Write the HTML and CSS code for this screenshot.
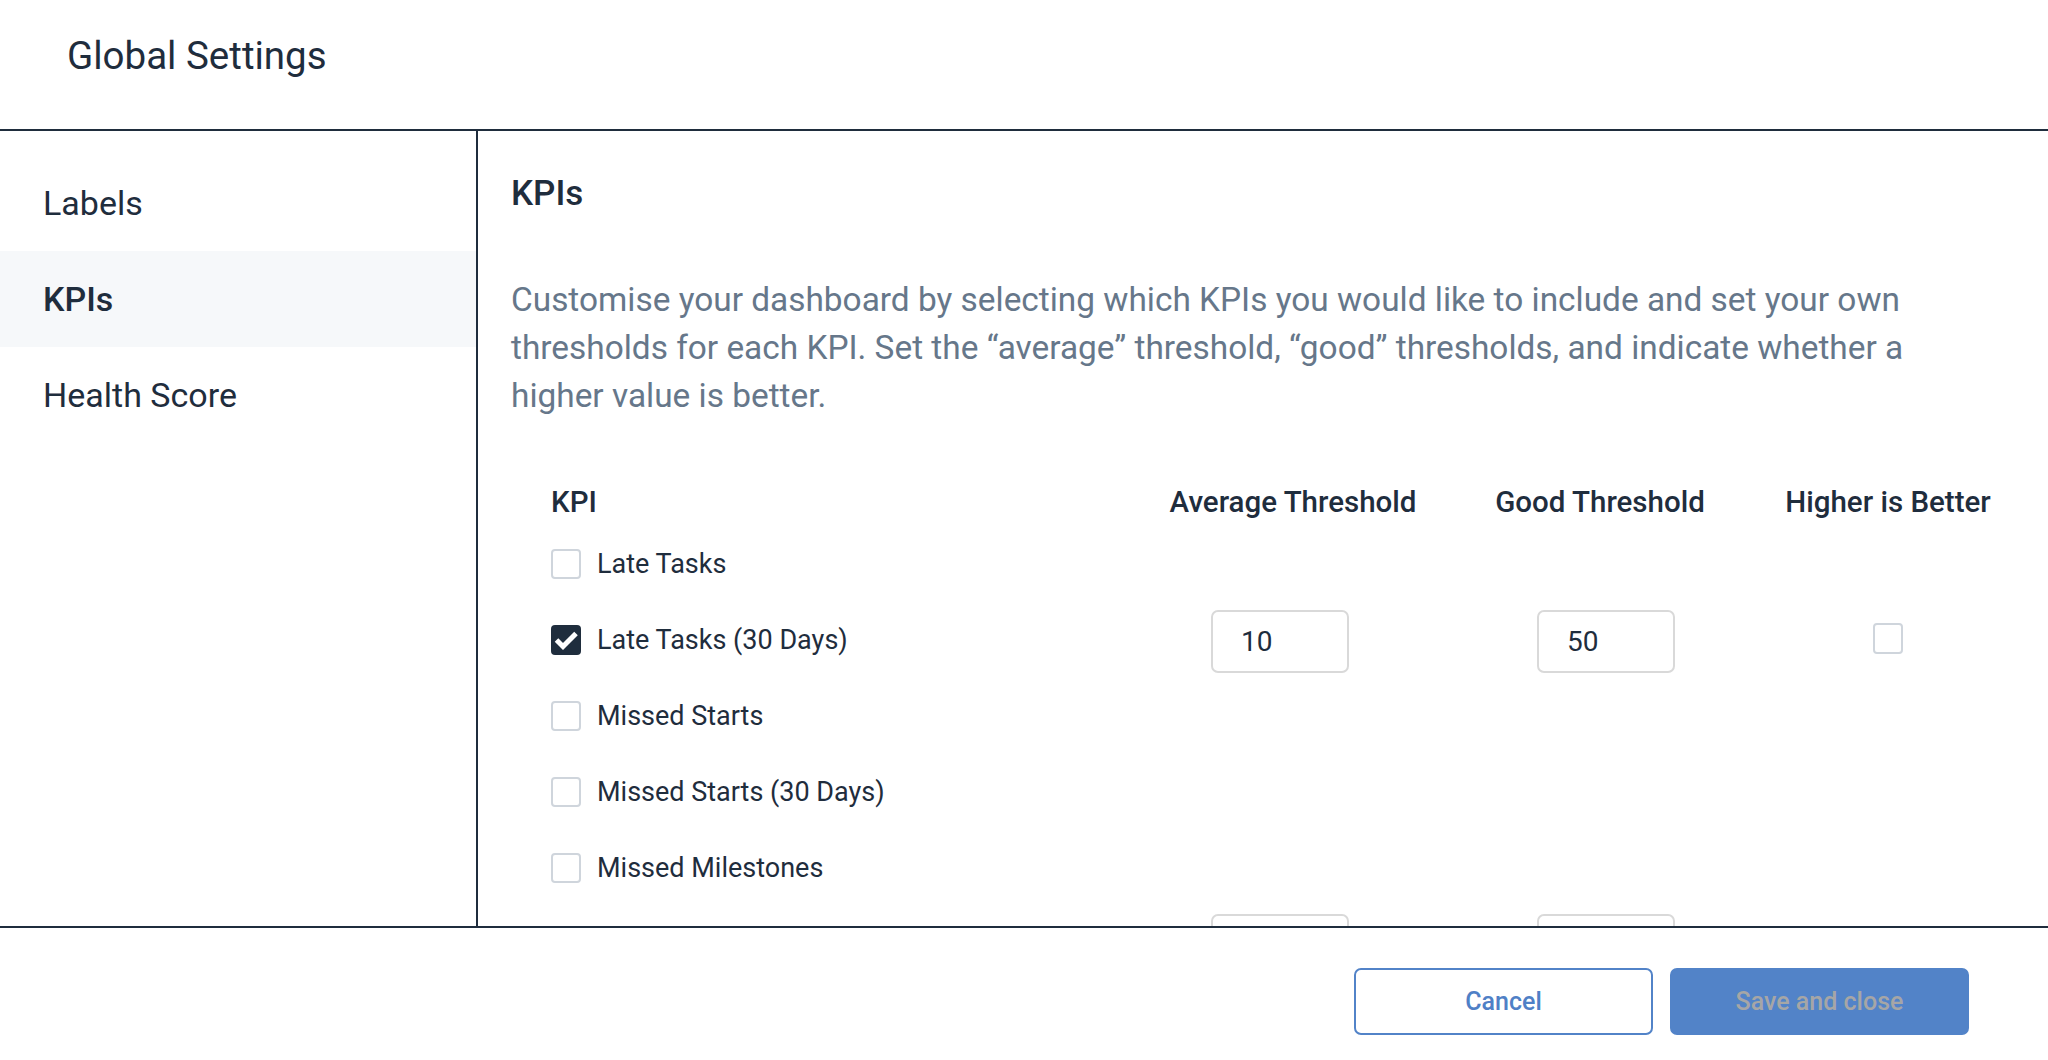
FILE: index.html
```html
<!DOCTYPE html>
<html lang="en">
<head>
<meta charset="utf-8">
<title>Global Settings</title>
<link rel="stylesheet" href="styles.css">
</head>
<body>
<div class="dialog">
  <header class="dialog-header">
    <h1 class="dialog-title">Global Settings</h1>
  </header>
  <main class="dialog-main">
    <nav class="sidebar">
      <div class="nav-item">Labels</div>
      <div class="nav-item active">KPIs</div>
      <div class="nav-item">Health Score</div>
    </nav>
    <section class="content">
      <h2 class="section-title">KPIs</h2>
      <p class="intro">Customise your dashboard by selecting which KPIs you would like to include and set your own thresholds for each KPI. Set the “average” threshold, “good” thresholds, and indicate whether a higher value is better.</p>
      <div class="kpi-table">
        <div class="th th-kpi">KPI</div>
        <div class="th">Average Threshold</div>
        <div class="th">Good Threshold</div>
        <div class="th">Higher is Better</div>

        <div class="td td-kpi"><span class="cb"></span><span class="kpi-name">Late Tasks</span></div>
        <div class="td"></div>
        <div class="td"></div>
        <div class="td"></div>

        <div class="td td-kpi"><span class="cb checked"><svg viewBox="0 0 30 30" width="30" height="30"><path d="M5.5 15 L12 21.5 L25 8.5" fill="none" stroke="#ffffff" stroke-width="5"/></svg></span><span class="kpi-name">Late Tasks (30 Days)</span></div>
        <div class="td td-avg"><input class="num" type="text" value="10"></div>
        <div class="td td-good"><input class="num" type="text" value="50"></div>
        <div class="td td-higher"><span class="cb"></span></div>

        <div class="td td-kpi"><span class="cb"></span><span class="kpi-name">Missed Starts</span></div>
        <div class="td"></div>
        <div class="td"></div>
        <div class="td"></div>

        <div class="td td-kpi"><span class="cb"></span><span class="kpi-name">Missed Starts (30 Days)</span></div>
        <div class="td"></div>
        <div class="td"></div>
        <div class="td"></div>

        <div class="td td-kpi"><span class="cb"></span><span class="kpi-name">Missed Milestones</span></div>
        <div class="td"></div>
        <div class="td"></div>
        <div class="td"></div>

        <div class="td td-kpi"><span class="cb checked"></span></div>
        <div class="td td-avg"><input class="num" type="text" value=""></div>
        <div class="td td-good"><input class="num" type="text" value=""></div>
        <div class="td td-higher"><span class="cb"></span></div>
      </div>
    </section>
  </main>
  <footer class="dialog-footer">
    <button class="btn btn-secondary" type="button">Cancel</button>
    <button class="btn btn-primary" type="button" disabled>Save and close</button>
  </footer>
</div>
</body>
</html>
```
FILE: styles.css
```css
* { box-sizing: border-box; }

html, body {
  margin: 0;
  padding: 0;
  background: #ffffff;
}

body {
  font-family: Roboto, "Liberation Sans", Arial, sans-serif;
  color: #1f2d3d;
}

.dialog {
  width: 2048px;
  height: 1060px;
  display: flex;
  flex-direction: column;
  overflow: hidden;
}

.dialog-header {
  height: 131px;
  flex: 0 0 131px;
  border-bottom: 2px solid #1f2d3d;
  padding: 34px 0 0 67px;
}

.dialog-title {
  margin: 0;
  font-size: 38.5px;
  line-height: 44px;
  font-weight: 400;
  color: #1f2d3d;
}

.dialog-main {
  flex: 1 1 auto;
  display: flex;
  min-height: 0;
}

.sidebar {
  width: 478px;
  flex: 0 0 478px;
  border-right: 2px solid #1f2d3d;
  padding-top: 24px;
}

.nav-item {
  height: 96px;
  display: flex;
  align-items: center;
  padding-left: 43px;
  font-size: 34px;
  color: #1f2d3d;
}

.nav-item.active {
  background: #f6f8fa;
  font-weight: 500;
}

.content {
  flex: 1 1 auto;
  padding: 43px 36px 0 33px;
  overflow: hidden;
}

.section-title {
  margin: 0;
  font-size: 35px;
  line-height: 40px;
  font-weight: 500;
  color: #1f2d3d;
}

.intro {
  max-width: 1450px;
  margin: 62px 0 0 0;
  font-size: 33.4px;
  line-height: 48px;
  color: #66778a;
}

.kpi-table {
  margin: 64px 0 0 40px;
  display: grid;
  grid-template-columns: 599px 286px 328px 248px;
  grid-template-rows: 42px;
  grid-auto-rows: 76px;
}

.th {
  font-size: 29.5px;
  line-height: 36px;
  font-weight: 500;
  text-align: center;
  color: #1f2d3d;
}

.th.th-kpi {
  text-align: left;
}

.td {
  display: flex;
  align-items: center;
  justify-content: center;
}

.td.td-kpi {
  justify-content: flex-start;
  gap: 16px;
}

.kpi-name {
  font-size: 27px;
  color: #1f2d3d;
}

.cb {
  width: 30px;
  height: 30px;
  flex: 0 0 30px;
  border: 2px solid #cfd5dc;
  border-radius: 4px;
  background: #ffffff;
  display: block;
}

.cb.checked {
  border: none;
  background: #1f2d3d;
}

.cb svg {
  display: block;
}

.td-higher .cb {
  width: 31px;
  height: 31px;
  margin-bottom: 4px;
}

.num {
  width: 138px;
  height: 63px;
  margin-top: 2px;
  border: 2px solid #d9d9d9;
  border-radius: 7px;
  padding: 0 0 0 28px;
  font-family: Roboto, "Liberation Sans", Arial, sans-serif;
  font-size: 28px;
  color: #1f2d3d;
  background: #ffffff;
  outline: none;
}

.td-avg .num {
  margin-right: 26px;
}

.td-good .num {
  margin-left: 12px;
}

.dialog-footer {
  height: 134px;
  flex: 0 0 134px;
  border-top: 2px solid #1f2d3d;
  display: flex;
  justify-content: flex-end;
  align-items: flex-start;
  gap: 17px;
  padding: 40px 79px 0 0;
}

.btn {
  width: 299px;
  height: 67px;
  border-radius: 7px;
  font-family: Roboto, "Liberation Sans", Arial, sans-serif;
  font-size: 25px;
  font-weight: 500;
  cursor: pointer;
}

.btn-secondary {
  background: #ffffff;
  border: 2px solid #5283c8;
  color: #4f80c6;
}

.btn-primary {
  background: #5283c8;
  border: 2px solid #5283c8;
  color: #a6a6a6;
}
```
